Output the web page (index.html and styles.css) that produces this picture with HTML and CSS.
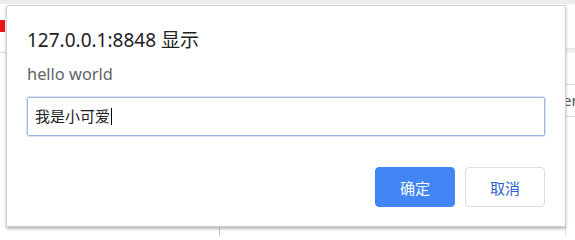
FILE: index.html
```html
<!DOCTYPE html>
<html lang="zh-CN">
<head>
<meta charset="utf-8">
<title>prompt</title>
<link rel="stylesheet" href="styles.css">
</head>
<body>
<div class="page">
  <div class="topbar"></div>
  <div class="cols">
    <div class="col-left">
      <div class="red-tab"></div>
      <div class="left-line"></div>
    </div>
    <div class="col-mid">
      <div class="mid-line"></div>
    </div>
    <div class="col-right">
      <div class="right-band"></div>
      <div class="right-row">er</div>
    </div>
  </div>
</div>

<div class="dialog">
  <div class="title">127.0.0.1:8848 显示</div>
  <div class="message">hello world</div>
  <div class="field">我是小可爱<span class="caret"></span></div>
  <div class="actions">
    <button class="btn btn-primary">确定</button>
    <button class="btn btn-secondary">取消</button>
  </div>
</div>
</body>
</html>
```
FILE: styles.css
```css
html, body {
  margin: 0;
  padding: 0;
  background: #ffffff;
  overflow: hidden;
}
body {
  width: 575px;
  height: 236px;
  font-family: "Noto Sans", "Noto Sans CJK SC", sans-serif;
  position: relative;
}
.page {
  width: 575px;
  height: 236px;
  display: flex;
  flex-direction: column;
}
.topbar {
  height: 4px;
  background: #ececec;
}
.cols {
  flex: 1;
  display: flex;
}
.col-left {
  width: 6px;
}
.red-tab {
  margin-top: 16px;
  width: 5px;
  height: 12px;
  background: #e8171d;
}
.left-line {
  margin-top: 20px;
  height: 1px;
  background: #d8d8d8;
}
.col-mid {
  flex: 1;
  display: flex;
  flex-direction: column;
  justify-content: flex-end;
}
.mid-line {
  margin-left: 213px;
  width: 1px;
  height: 9px;
  background: #c8c8c8;
}
.col-right {
  width: 9px;
  border-left: 1px solid #e0e0e0;
  overflow: hidden;
}
.right-band {
  margin-top: 44px;
  height: 4px;
  background: #efefef;
  border-top: 1px solid #e4e4e4;
}
.right-row {
  margin-top: 31px;
  height: 31px;
  border-top: 1px solid #dcdcdc;
  border-bottom: 1px solid #dcdcdc;
  font-size: 15px;
  line-height: 31px;
  color: #555;
  margin-left: -3px;
  overflow: hidden;
  white-space: nowrap;
}

.dialog {
  position: absolute;
  left: 6px;
  top: 5px;
  width: 518px;
  height: 180px;
  padding: 22px 20px 18px 20px;
  background: #ffffff;
  border: 1px solid #cfcfcf;
  border-radius: 2px;
  box-shadow: 0 2px 3px rgba(0, 0, 0, 0.28);
  display: flex;
  flex-direction: column;
}
.title {
  font-size: 19px;
  line-height: 24px;
  color: #202124;
}
.message {
  margin-top: 12px;
  font-size: 16.4px;
  line-height: 20px;
  color: #5f6368;
}
.field {
  margin-top: 13px;
  height: 37px;
  border: 1px solid #9fb5dc;
  border-radius: 2px;
  box-shadow: 0 0 0 1px #dbe5f4;
  padding-left: 7px;
  font-size: 15px;
  line-height: 37px;
  color: #202124;
  display: flex;
  align-items: center;
}
.caret {
  display: inline-block;
  width: 1px;
  height: 17px;
  background: #000;
  margin-left: 1px;
}
.actions {
  margin-top: 31px;
  display: flex;
  justify-content: flex-end;
  gap: 10px;
}
.btn {
  width: 80px;
  height: 40px;
  border-radius: 4px;
  font-family: "Noto Sans CJK SC", sans-serif;
  font-size: 15px;
  padding: 0;
  cursor: pointer;
}
.btn-primary {
  background: #4285f4;
  border: 1px solid #4285f4;
  color: #ffffff;
}
.btn-secondary {
  background: #ffffff;
  border: 1px solid #dadce0;
  color: #2d63c8;
}
```
